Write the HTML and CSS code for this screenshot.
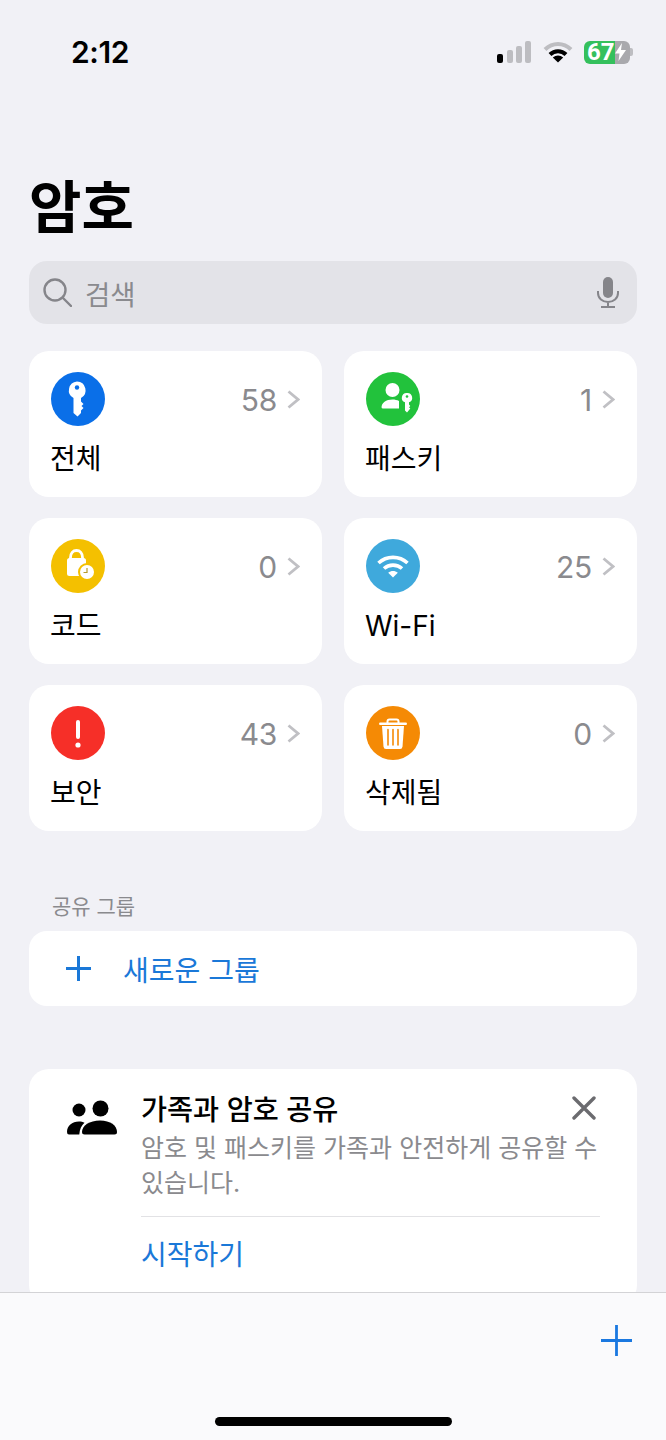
FILE: index.html
```html
<!DOCTYPE html>
<html lang="ko">
<head>
    <meta charset="UTF-8">
    <meta name="viewport" content="width=device-width, initial-scale=1.0">
    <title>암호</title>
    <link rel="stylesheet" href="styles.css">
</head>
<body>
    <div class="status">
        <span class="time">2:12</span>
        <div class="status-icons">
            <svg class="signal" width="35" height="22" viewBox="0 0 35 22">
                <rect x="0" y="13" width="6" height="9" rx="2" fill="#000"/>
                <rect x="10" y="9" width="6" height="13" rx="2" fill="#bdbdc1"/>
                <rect x="19" y="5" width="6" height="17" rx="2" fill="#bdbdc1"/>
                <rect x="28" y="0" width="6" height="22" rx="2" fill="#bdbdc1"/>
            </svg>
            <svg class="wifi" width="30" height="22" viewBox="0 0 30 22" fill="none" stroke-width="4">
                <path d="M2 8.500C9.500 1 20.500 1 28 8.500" stroke="#bdbdc1"/>
                <path d="M7 13.500C11.500 9 18.500 9 23 13.500" stroke="#000"/>
                <path d="M15 21.500L9.800 16.500C12.800 13.700 17.200 13.700 20.200 16.500Z" fill="#000" stroke="none"/>
            </svg>
            <div class="battery">
                <span class="battery-level">67</span>
                <svg width="11" height="18" viewBox="0 0 11 18"><path d="M7 0L0 10.500H4.500L3.500 18L11 7H6Z" fill="#fff"/></svg>
            </div>
            <div class="battery-tip"></div>
        </div>
    </div>

    <h1 class="title">암호</h1>

    <div class="search">
        <svg width="29" height="29" viewBox="0 0 29 29" fill="none" stroke="#85858a" stroke-width="2.400" stroke-linecap="round">
            <circle cx="12" cy="12" r="10.500"/>
            <path d="M20 20L28 28"/>
        </svg>
        <span class="search-text">검색</span>
        <svg class="mic" width="22" height="31" viewBox="0 0 22 31" fill="none" stroke="#85858a" stroke-width="2">
            <rect x="6" y="0" width="10" height="21" rx="5" fill="#85858a" stroke="none"/>
            <path d="M1 14V16C1 21.500 5.500 25 11 25S21 21.500 21 16V14M11 25V30M4 30H18"/>
        </svg>
    </div>

    <div class="grid">
        <div class="card">
            <div class="card-top">
                <svg class="badge" width="54" height="54" viewBox="0 0 54 54">
                    <circle cx="27" cy="27" r="27" fill="#0a6fe8"/>
                    <path d="M26 9.500A8.800 8.800 0 0 1 30 26V29.500L32.500 32L30.500 34L32.500 36L30 38.500V41L26.500 44.500L22.500 41V26A8.800 8.800 0 0 1 26 9.500Z" fill="#fff"/>
                    <circle cx="26" cy="15.500" r="2.200" fill="#0a6fe8"/>
                </svg>
                <span class="count">58</span>
                <svg class="chevron" width="13" height="19" viewBox="0 0 13 19"><path d="M1.500 1.500L11 9.500L1.500 17.500"/></svg>
            </div>
            <div class="label">전체</div>
        </div>
        <div class="card">
            <div class="card-top">
                <svg class="badge" width="54" height="54" viewBox="0 0 54 54">
                    <circle cx="27" cy="27" r="27" fill="#22c23c"/>
                    <circle cx="26.500" cy="18" r="7" fill="#fff"/>
                    <path d="M15.500 36C15.500 30.500 20 27.500 26.500 27.500C29 27.500 31 28 33 29V36.500H17Q15.500 36.500 15.500 35Z" fill="#fff"/>
                    <circle cx="41" cy="26" r="7" fill="#22c23c"/>
                    <path d="M41 21A4.800 4.800 0 0 1 43 30.300V32.500L44.300 34L43 35.300L44.300 36.500L41 40.500L39 38.500V30.300A4.800 4.800 0 0 1 41 21Z" fill="#fff"/>
                    <circle cx="41" cy="24.500" r="1.300" fill="#22c23c"/>
                </svg>
                <span class="count">1</span>
                <svg class="chevron" width="13" height="19" viewBox="0 0 13 19"><path d="M1.500 1.500L11 9.500L1.500 17.500"/></svg>
            </div>
            <div class="label">패스키</div>
        </div>
        <div class="card">
            <div class="card-top">
                <svg class="badge" width="54" height="54" viewBox="0 0 54 54">
                    <circle cx="27" cy="27" r="27" fill="#f4c000"/>
                    <path d="M19.500 20V18.500C19.500 14 22 11.500 25.500 11.500S31.500 14 31.500 18.500V20" fill="none" stroke="#fff" stroke-width="2.800"/>
                    <rect x="16" y="19" width="19" height="18" rx="2.500" fill="#fff"/>
                    <circle cx="36" cy="33" r="9" fill="#f4c000"/>
                    <circle cx="36" cy="33" r="7" fill="#fff"/>
                    <path d="M36 29V33.500H32.500" fill="none" stroke="#b79a2a" stroke-width="1.200"/>
                </svg>
                <span class="count">0</span>
                <svg class="chevron" width="13" height="19" viewBox="0 0 13 19"><path d="M1.500 1.500L11 9.500L1.500 17.500"/></svg>
            </div>
            <div class="label">코드</div>
        </div>
        <div class="card">
            <div class="card-top">
                <svg class="badge" width="54" height="54" viewBox="0 0 54 54" fill="none" stroke="#fff" stroke-width="3.600">
                    <circle cx="27" cy="27" r="27" fill="#3fa9dc" stroke="none"/>
                    <path d="M12.500 24C20.500 16.500 33.500 16.500 41.500 24"/>
                    <path d="M18 29.500C23 25 31 25 36 29.500"/>
                    <path d="M27 38.500L22.200 33.800C25 31.500 29 31.500 31.800 33.800Z" fill="#fff" stroke="none"/>
                </svg>
                <span class="count">25</span>
                <svg class="chevron" width="13" height="19" viewBox="0 0 13 19"><path d="M1.500 1.500L11 9.500L1.500 17.500"/></svg>
            </div>
            <div class="label">Wi-Fi</div>
        </div>
        <div class="card">
            <div class="card-top">
                <svg class="badge" width="54" height="54" viewBox="0 0 54 54">
                    <circle cx="27" cy="27" r="27" fill="#f62f28"/>
                    <rect x="25" y="14" width="4" height="19" rx="2" fill="#fff"/>
                    <circle cx="27" cy="39" r="2.600" fill="#fff"/>
                </svg>
                <span class="count">43</span>
                <svg class="chevron" width="13" height="19" viewBox="0 0 13 19"><path d="M1.500 1.500L11 9.500L1.500 17.500"/></svg>
            </div>
            <div class="label">보안</div>
        </div>
        <div class="card">
            <div class="card-top">
                <svg class="badge" width="54" height="54" viewBox="0 0 54 54">
                    <circle cx="27" cy="27" r="27" fill="#f58a05"/>
                    <path d="M21.500 17V15.500Q21.500 13.500 23.500 13.500H30.500Q32.500 13.500 32.500 15.500V17" fill="none" stroke="#fff" stroke-width="2"/>
                    <rect x="13" y="16.500" width="28" height="2.500" rx="1.200" fill="#fff"/>
                    <path d="M16 20H38L36.500 40.500Q36.300 43 34 43H20Q17.700 43 17.500 40.500Z" fill="#fff"/>
                    <path d="M22 23.500V39M27 23.500V39M32 23.500V39" stroke="#f58a05" stroke-width="1.600" stroke-linecap="round"/>
                </svg>
                <span class="count">0</span>
                <svg class="chevron" width="13" height="19" viewBox="0 0 13 19"><path d="M1.500 1.500L11 9.500L1.500 17.500"/></svg>
            </div>
            <div class="label">삭제됨</div>
        </div>
    </div>

    <div class="section-title">공유 그룹</div>
    <div class="group-row">
        <svg width="25" height="25" viewBox="0 0 25 25" stroke="#1a78d8" stroke-width="3"><path d="M12.500 0V25M0 12.500H25"/></svg>
        <span class="group-text">새로운 그룹</span>
    </div>

    <div class="info-card">
        <svg class="people" width="51" height="36" viewBox="0 0 51 36" fill="#000">
            <circle cx="13" cy="10" r="6.500"/>
            <circle cx="34.500" cy="8.500" r="8"/>
            <path d="M1 32C1 26 6 21.500 13 21.500C15 21.500 17 22 18.500 22.800C15.500 25.500 13.700 29 13.300 34.500H3Q1 34.500 1 32Z"/>
            <path d="M16 32C16 25.500 23.500 20.500 34 20.500S51 25.500 51 32Q51 34.500 48.500 34.500H18.500Q16 34.500 16 32Z"/>
        </svg>
        <div class="info-body">
            <div class="info-head">
                <div class="info-title">가족과 암호 공유</div>
                <svg class="close" width="24" height="24" viewBox="0 0 24 24" stroke="#6b6b6f" stroke-width="3.400" stroke-linecap="round"><path d="M2 2L22 22M22 2L2 22"/></svg>
            </div>
            <p class="info-text">암호 및 패스키를 가족과 안전하게 공유할 수 있습니다.</p>
            <div class="info-link">시작하기</div>
        </div>
    </div>

    <div class="toolbar">
        <svg class="add" width="31" height="31" viewBox="0 0 31 31" stroke="#1a78e0" stroke-width="2.800"><path d="M15.500 0V31M0 15.500H31"/></svg>
        <div class="home-bar"></div>
    </div>
</body>
</html>
```

FILE: styles.css
```css
body {
    background-color: #f1f1f6;
    color: #000;
    font-family: Inter, "Noto Sans CJK KR", sans-serif;
    margin: 0;
    height: 1440px;
    overflow: hidden;
    position: relative;
}

/* status bar */
.status {
    height: 104px;
    display: flex;
    align-items: center;
    justify-content: space-between;
    padding: 0 33px 0 71px;
}

.time {
    font-size: 30px;
    font-weight: 600;
    letter-spacing: -0.4px;
}

.status-icons {
    display: flex;
    align-items: center;
}

.signal {
    margin-right: 11px;
}

.wifi {
    margin-right: 11px;
}

.battery {
    width: 46px;
    height: 23px;
    box-sizing: border-box;
    padding-left: 3px;
    border-radius: 6px;
    background: linear-gradient(to right, #34c05c 67%, #a9a9ad 67%);
    display: flex;
    align-items: center;
    color: #fff;
}

.battery-level {
    font-family: Roboto, sans-serif;
    font-size: 24px;
    font-weight: 700;
    line-height: 23px;
}

.battery-tip {
    width: 3px;
    height: 8px;
    background-color: #bdbdc1;
    border-radius: 0 2px 2px 0;
}

/* header */
.title {
    font-size: 57px;
    font-weight: 700;
    line-height: 64px;
    margin: 72px 0 21px 29px;
}

.search {
    height: 63px;
    margin: 0 29px;
    padding: 0 18px 0 14px;
    background-color: #e3e3e8;
    border-radius: 18px;
    display: flex;
    align-items: center;
}

.search-text {
    font-size: 27.500px;
    color: #8a8a8e;
    margin-left: 13px;
}

.mic {
    margin-left: auto;
}

/* cards */
.grid {
    display: grid;
    grid-template-columns: 293px 293px;
    grid-auto-rows: 146px;
    column-gap: 22px;
    row-gap: 21px;
    margin: 27px 29px 0;
}

.card {
    background-color: #fff;
    border-radius: 20px;
    padding: 21px 22px 0 21px;
}

.card-top {
    display: flex;
    align-items: center;
    height: 54px;
}

.badge {
    margin-left: 1px;
    margin-right: auto;
}

.count {
    font-size: 30px;
    line-height: 36px;
    letter-spacing: -0.3px;
    color: #8a8a8e;
    margin: 1px 10px 0 0;
}

.chevron {
    fill: none;
    stroke: #c0c0c4;
    stroke-width: 2.800;
}

.label {
    font-size: 28px;
    line-height: 40px;
    margin-top: 13px;
}

/* shared groups */
.section-title {
    font-size: 21px;
    line-height: 30px;
    color: #8a8a8e;
    margin: 61px 0 9px 52px;
}

.group-row {
    height: 75px;
    margin: 0 29px;
    padding-left: 37px;
    background-color: #fff;
    border-radius: 18px;
    display: flex;
    align-items: center;
}

.group-text {
    font-size: 28px;
    color: #1a78d8;
    margin-left: 32px;
}

/* family sharing card */
.info-card {
    margin: 63px 29px 0;
    padding: 22px 37px 30px;
    background-color: #fff;
    border-radius: 20px;
    display: flex;
    align-items: flex-start;
}

.people {
    margin-top: 9px;
    margin-right: 24px;
    flex-shrink: 0;
}

.info-body {
    flex: 1;
}

.info-head {
    display: flex;
    justify-content: space-between;
}

.info-title {
    font-size: 28.300px;
    font-weight: 500;
    line-height: 38px;
}

.close {
    margin: 5px 4px 0 0;
}

.info-text {
    font-size: 25px;
    line-height: 35px;
    color: #8a8a8e;
    margin: 2px 0 0;
    padding-bottom: 15px;
    border-bottom: 1px solid #e2e2e5;
}

.info-link {
    font-size: 28px;
    line-height: 40px;
    color: #1a78d8;
    margin-top: 18px;
}

/* bottom toolbar */
.toolbar {
    position: absolute;
    left: 0;
    right: 0;
    bottom: 0;
    height: 147px;
    background-color: #fafafc;
    border-top: 1px solid #d3d3d6;
}

.add {
    display: block;
    margin: 32px 34px 0 auto;
}

.home-bar {
    width: 237px;
    height: 9px;
    background-color: #000;
    border-radius: 5px;
    margin: 61px auto 0;
}
```
